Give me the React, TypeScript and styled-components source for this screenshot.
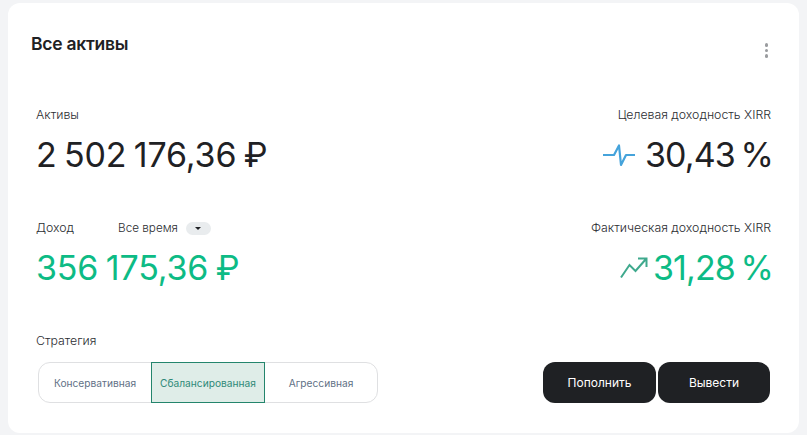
import React, { useState } from 'react'
import styled, { createGlobalStyle } from 'styled-components'

const GlobalStyle = createGlobalStyle`
  html, body {
    margin: 0;
    background: #f3f4f6;
    font-family: Inter, "Liberation Sans", sans-serif;
  }
`

const Card = styled.div`
  box-sizing: border-box;
  width: 791px;
  height: 430px;
  margin: 3px 8px 2px;
  padding: 30px 28px 30px 23px;
  background: #fff;
  border-radius: 12px;
`

const Header = styled.div`
  display: flex;
  justify-content: space-between;
  align-items: flex-start;
  height: 73px;
`

const Title = styled.h2`
  margin: 0;
  font-size: 17.5px;
  line-height: 22px;
  font-weight: 600;
  letter-spacing: -0.25px;
  color: #1f2124;
`

const MenuButton = styled.div`
  display: flex;
  flex-direction: column;
  gap: 2px;
  margin: 10px 3px 0 0;
`

const Dot = styled.span`
  width: 3.5px;
  height: 3.5px;
  border-radius: 50%;
  background: #9a9c9f;
`

const StatsRow = styled.div`
  display: flex;
  justify-content: space-between;
  align-items: flex-start;
  padding-left: 5px;
  height: 113px;
`

const Stat = styled.div<{ $right?: boolean }>`
  display: flex;
  flex-direction: column;
  align-items: ${(p) => (p.$right ? 'flex-end' : 'flex-start')};
`

const LabelRow = styled.div`
  display: flex;
  align-items: center;
  height: 18px;
  margin-bottom: 11px;
`

const Label = styled.span`
  font-size: 12.3px;
  line-height: 18px;
  font-weight: 300;
  color: #2b2d31;
`

const PeriodLabel = styled(Label)`
  margin-left: 44px;
  font-size: 11.7px;
`

const PeriodToggle = styled.span`
  display: flex;
  align-items: center;
  justify-content: center;
  width: 25px;
  height: 13px;
  margin-left: 8px;
  border-radius: 7px;
  background: #e9ecee;

  &::after {
    content: '';
    border-left: 3px solid transparent;
    border-right: 3px solid transparent;
    border-top: 3.5px solid #1f2124;
  }
`

const ValueRow = styled.div`
  display: flex;
  align-items: center;
`

const Value = styled.div<{ $green?: boolean; $tight?: boolean }>`
  font-size: 34px;
  line-height: 40px;
  font-weight: 400;
  letter-spacing: ${(p) => (p.$tight ? '-0.9px' : '-0.15px')};
  word-spacing: ${(p) => (p.$tight ? '-3px' : '-2px')};
  margin-right: ${(p) => (p.$tight ? '-2px' : '0')};
  white-space: nowrap;
  color: ${(p) => (p.$green ? '#0dbb85' : '#1f2124')};
`

const IconSlot = styled.svg<{ $gap: number }>`
  display: block;
  margin-right: ${(p) => p.$gap}px;
`

const Footer = styled.div`
  display: flex;
  justify-content: space-between;
  align-items: flex-end;
  padding: 0 1px 0 5px;
`

const StrategyBlock = styled.div`
  display: flex;
  flex-direction: column;
`

const StrategyLabel = styled(Label)`
  margin-bottom: 12px;
`

const Segments = styled.div`
  display: flex;
  box-sizing: border-box;
  width: 340px;
  height: 41px;
  margin-left: 2px;
  border: 1px solid #dfe0e2;
  border-radius: 12px;
`

const Segment = styled.button<{ $active?: boolean; $w: number }>`
  box-sizing: border-box;
  width: ${(p) => p.$w}px;
  height: 41px;
  margin-top: -1px;
  padding: 0;
  font-family: inherit;
  font-size: 10.2px;
  font-weight: 400;
  cursor: pointer;
  background: ${(p) => (p.$active ? '#dfede8' : 'transparent')};
  border: ${(p) => (p.$active ? '1px solid #23856c' : 'none')};
  color: ${(p) => (p.$active ? '#2f8a78' : '#5f7186')};
`

const Actions = styled.div`
  display: flex;
  gap: 2px;
`

const ActionButton = styled.button<{ $w: number }>`
  width: ${(p) => p.$w}px;
  height: 41px;
  padding: 0;
  border: none;
  border-radius: 12px;
  background: #1f2124;
  color: #fff;
  font-family: inherit;
  font-size: 12px;
  font-weight: 400;
  cursor: pointer;
`

const segments = [
  { name: 'Консервативная', w: 112 },
  { name: 'Сбалансированная', w: 114 },
  { name: 'Агрессивная', w: 112 },
]

export default function App() {
  const [active, setActive] = useState(1)

  return (
    <>
      <GlobalStyle />
      <Card>
        <Header>
          <Title>Все активы</Title>
          <MenuButton>
            <Dot />
            <Dot />
            <Dot />
          </MenuButton>
        </Header>

        <StatsRow>
          <Stat>
            <LabelRow>
              <Label>Активы</Label>
            </LabelRow>
            <Value>2 502 176,36 ₽</Value>
          </Stat>
          <Stat $right>
            <LabelRow>
              <Label>Целевая доходность XIRR</Label>
            </LabelRow>
            <ValueRow>
              <IconSlot $gap={10} width="32" height="24" viewBox="0 0 32 24" fill="none">
                <path
                  d="M0.5 12H11L16 2.5L18 22L23 12H31.5"
                  stroke="#45a3db"
                  strokeWidth="2.2"
                  strokeLinejoin="round"
                  strokeLinecap="round"
                />
              </IconSlot>
              <Value $tight>30,43 %</Value>
            </ValueRow>
          </Stat>
        </StatsRow>

        <StatsRow>
          <Stat>
            <LabelRow>
              <Label>Доход</Label>
              <PeriodLabel>Все время</PeriodLabel>
              <PeriodToggle />
            </LabelRow>
            <Value $green>356 175,36 ₽</Value>
          </Stat>
          <Stat $right>
            <LabelRow>
              <Label>Фактическая доходность XIRR</Label>
            </LabelRow>
            <ValueRow>
              <IconSlot $gap={5} width="28" height="22" viewBox="0 0 28 22" fill="none">
                <path
                  d="M1 20.5L9.5 8L15.5 14L26 2M18 1.5H26.5V10"
                  stroke="#3fa98d"
                  strokeWidth="2"
                />
              </IconSlot>
              <Value $green $tight>31,28 %</Value>
            </ValueRow>
          </Stat>
        </StatsRow>

        <Footer>
          <StrategyBlock>
            <StrategyLabel>Стратегия</StrategyLabel>
            <Segments>
              {segments.map((s, i) => (
                <Segment key={s.name} $w={s.w} $active={i === active} onClick={() => setActive(i)}>
                  {s.name}
                </Segment>
              ))}
            </Segments>
          </StrategyBlock>
          <Actions>
            <ActionButton $w={113}>Пополнить</ActionButton>
            <ActionButton $w={112}>Вывести</ActionButton>
          </Actions>
        </Footer>
      </Card>
    </>
  )
}
